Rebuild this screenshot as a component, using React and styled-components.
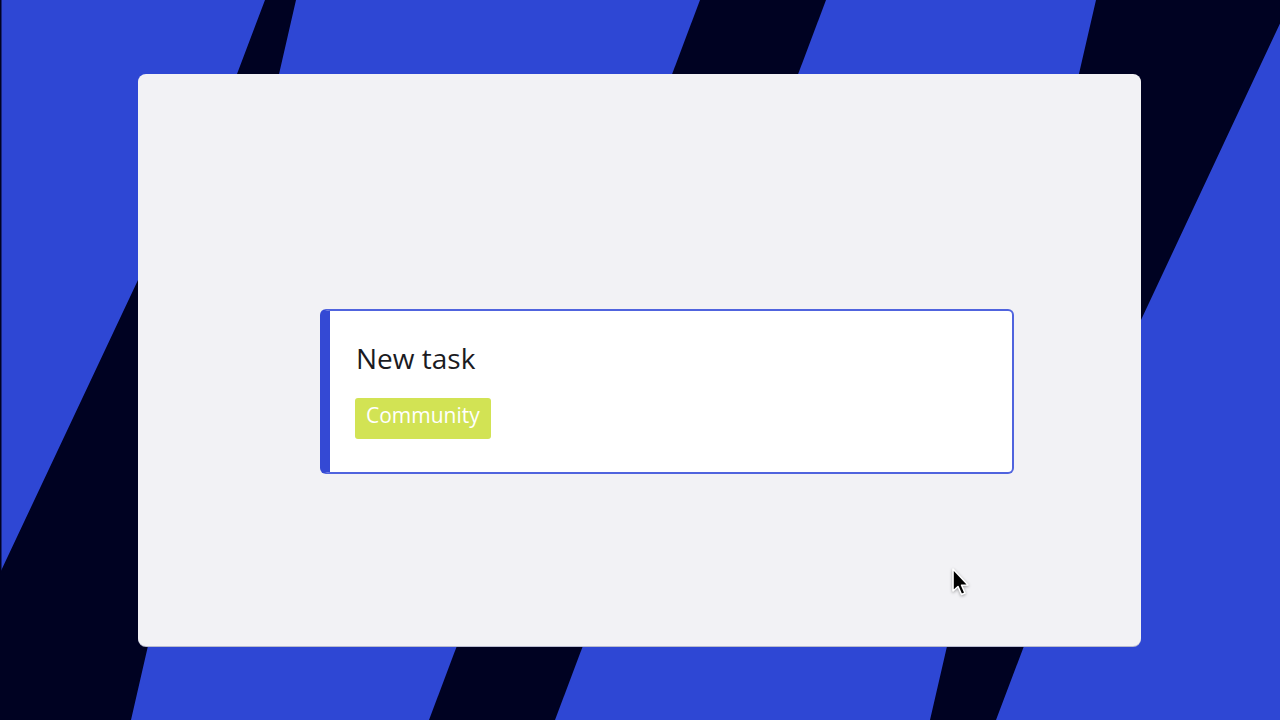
import React from 'react';
import styled, { createGlobalStyle } from 'styled-components';

const BLUE = '#2e47d4';
const NAVY = '#000222';

const stripes = `<svg xmlns="http://www.w3.org/2000/svg" width="1280" height="720" viewBox="0 0 1280 720">
<rect width="1280" height="720" fill="${BLUE}"/>
<rect x="0" y="0" width="1.5" height="720" fill="${NAVY}"/>
<polygon fill="${NAVY}" points="265,0 296,0 131,720 0,720 0,573 138,280 237,74"/>
<polygon fill="${NAVY}" points="700,0 826,0 555,720 429,720"/>
<polygon fill="${NAVY}" points="1096,0 1291,0 1141,320 1024,646 996,720 930,720"/>
</svg>`;

const stripesUrl = `url("data:image/svg+xml,${encodeURIComponent(stripes)}")`;

const GlobalStyle = createGlobalStyle`
  html, body {
    margin: 0;
    padding: 0;
    height: 100%;
    overflow: hidden;
  }
  body {
    font-family: "Open Sans", "Noto Sans", sans-serif;
  }
`;

const Stage = styled.div`
  width: 100vw;
  height: 100vh;
  display: flex;
  align-items: center;
  justify-content: center;
  background: ${stripesUrl} no-repeat;
  background-size: 100% 100%;
`;

const Board = styled.div`
  position: relative;
  box-sizing: border-box;
  width: 1003px;
  height: 572px;
  margin-left: -1px;
  background: #f2f2f5;
  border-radius: 8px;
  box-shadow: 0 1px 0 #b9bccf;
  padding: 235px 127px 0 182px;
  display: flex;
  align-items: flex-start;
`;

const TaskCard = styled.div`
  box-sizing: border-box;
  width: 694px;
  height: 165px;
  background: #ffffff;
  border: 2px solid #5064de;
  border-left: 10px solid #3449d4;
  border-radius: 6px;
  padding: 28px 24px 0 25px;
  display: flex;
  flex-direction: column;
  align-items: flex-start;
  gap: 21px;
`;

const TaskTitle = styled.div`
  font-size: 28px;
  line-height: 38px;
  color: #1b1b1f;
  padding-left: 1px;
`;

const Tag = styled.span`
  font-size: 21px;
  line-height: 29px;
  color: #ffffff;
  background: ${({ $color }) => $color};
  border-radius: 3px;
  padding: 3px 11px 9px;
`;

const Pointer = styled.svg`
  position: absolute;
  left: 812px;
  top: 493px;
  filter: drop-shadow(0 1px 1.5px rgba(0, 0, 0, 0.35));
`;

function App() {
  return (
    <>
      <GlobalStyle />
      <Stage>
        <Board>
          <TaskCard>
            <TaskTitle>New task</TaskTitle>
            <Tag $color="#d2e354">Community</Tag>
          </TaskCard>
          <Pointer width="22" height="32" viewBox="0 0 22 32">
            <path
              d="M3 2 L3 24 L8 19.5 L11.5 27.5 L15 26 L11.6 18.2 L18 18 Z"
              fill="#000"
              stroke="#fff"
              strokeWidth="1.6"
              strokeLinejoin="round"
            />
          </Pointer>
        </Board>
      </Stage>
    </>
  );
}

export default App;
